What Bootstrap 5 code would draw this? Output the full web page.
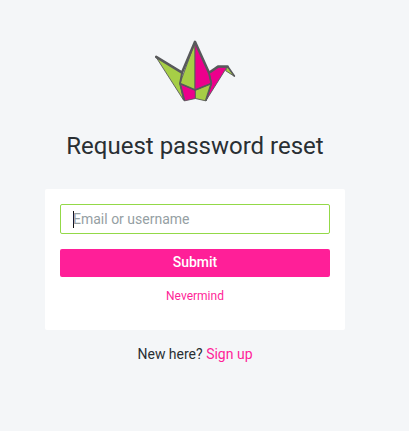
<!DOCTYPE html>
<html lang="en">
<head>
<meta charset="utf-8">
<meta name="viewport" content="width=device-width, initial-scale=1">
<title>Request password reset</title>
<link href="https://cdn.jsdelivr.net/npm/bootstrap@5.3.0/dist/css/bootstrap.min.css" rel="stylesheet">
<style>
body { background: #f4f6f8; color: #292f33; font-family: Roboto, sans-serif; font-size: 14px; line-height: 20px; overflow: hidden; }
.reset-page { width: 390px; padding: 30px 45px 0; }
.crane { width: 100px; height: 80px; }
.reset-title { font-size: 24px; line-height: 32px; margin: 20px 0 27px; font-weight: 400; }
.reset-card { height: 141px; padding: 15px; border-radius: 2px; }
.login-field { height: 30px; border: 1px solid #93d948; border-radius: 2px; padding: 4px 12px; color: #95a0a3; }
.caret { width: 1px; height: 17px; background: #111; margin-right: -1px; }
.btn-pink { --bs-btn-bg: #ff1f98; --bs-btn-color: #fff; --bs-btn-hover-bg: #e61588; --bs-btn-hover-color: #fff; height: 28px; margin-top: 15px; font-size: 14px; font-weight: 500; line-height: 26px; border-radius: 2px; }
.pink-link { color: #ff1f98; text-decoration: none; }
.nevermind { font-size: 12px; line-height: 16px; margin-top: 11px; }
.signup { margin-top: 14px; }
</style>
</head>
<body>
<main class="reset-page text-center">
  <svg class="crane d-block mx-auto" viewBox="0 0 100 80" role="img" aria-label="Crane logo">
    <g stroke="#58595b" stroke-width=".9" stroke-linejoin="round">
      <path fill="#a6ce46" d="M10.7 26.6L37.5 42.5L35 53L38.5 70Z"/>
      <path fill="#ec008c" d="M64 43.5L73 37H82L61 70.5L66.5 53Z"/>
      <path fill="#a6ce46" d="M82.6 37L89.5 46.4L80.6 40.7Z"/>
      <path fill="#ec008c" d="M35 53.5L50.4 60V68.5L39.3 70.9Z"/>
      <path fill="#a6ce46" d="M50.4 60L66.5 53L61 70.9L50.4 68.5Z"/>
      <path fill="#a6ce46" d="M50 12L35 53.5L50 60Z"/>
      <path fill="#ec008c" d="M50 12V60L66.3 53.5L64.2 43Z"/>
    </g>
    <g fill="none" stroke="#58595b" stroke-linejoin="round" stroke-linecap="round">
      <path stroke-width="2.5" d="M11.2 26.9L37 42.6L50 11.8L64 42.8L73 36.6H82.5"/>
      <path stroke-width="1.5" d="M83 36.8L89.4 46"/>
      <path stroke-width="1.8" d="M37 43L35 53.5L50.2 60L66.3 53.5L64 43.5M35 53.5L39.3 70M66.3 53.5L61 70"/>
    </g>
  </svg>
  <h1 class="reset-title">Request password reset</h1>
  <section class="reset-card bg-white">
    <div class="login-field d-flex align-items-center bg-white"><span class="caret"></span><span>Email or username</span></div>
    <button type="button" class="btn btn-pink d-block w-100 border-0 pt-0 pb-1">Submit</button>
    <div class="nevermind"><a class="pink-link" href="#">Nevermind</a></div>
  </section>
  <p class="signup mb-0">New here? <a class="pink-link" href="#">Sign up</a></p>
</main>
<script src="https://cdn.jsdelivr.net/npm/bootstrap@5.3.0/dist/js/bootstrap.bundle.min.js"></script>
</body>
</html>
